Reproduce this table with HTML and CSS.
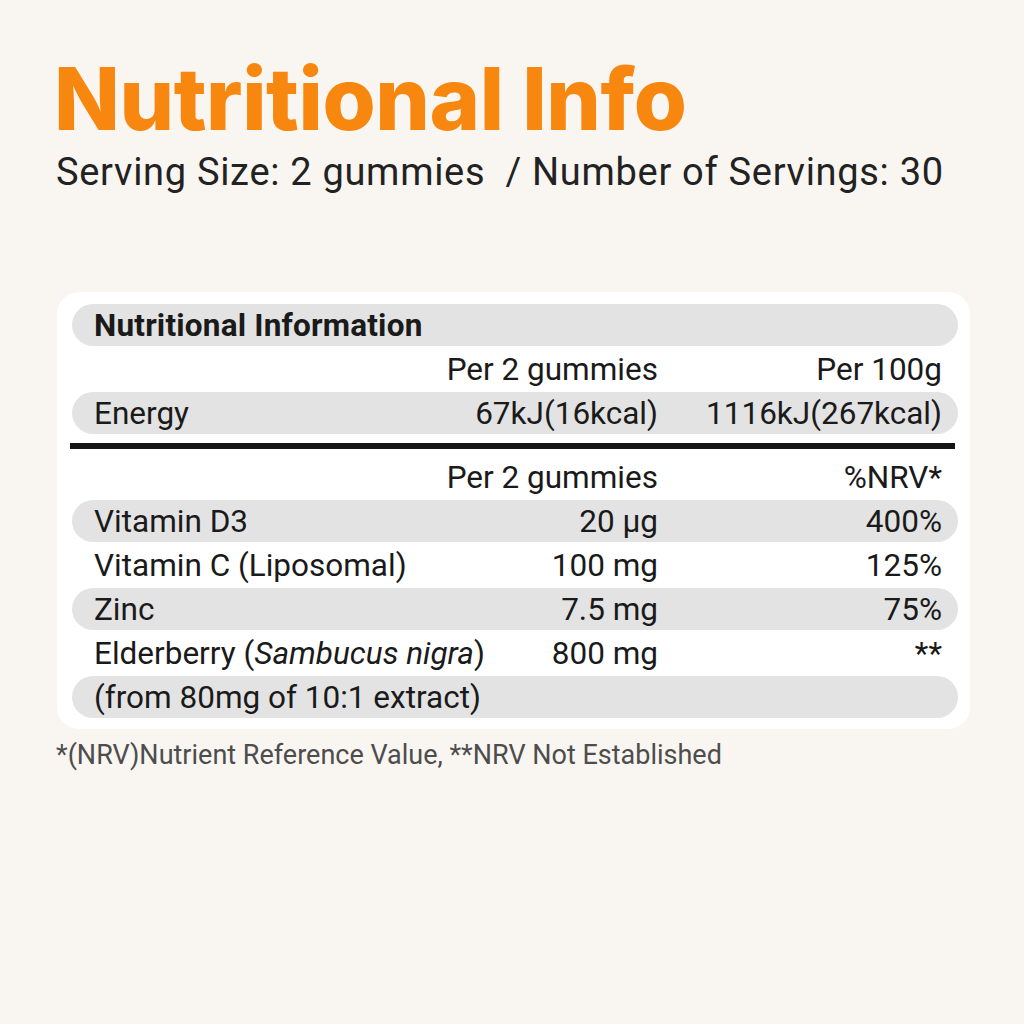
FILE: index.html
```html
<!DOCTYPE html>
<html lang="en">
<head>
<meta charset="utf-8">
<title>Nutritional Info</title>
<link rel="stylesheet" href="styles.css">
</head>
<body>
<main class="page">
  <h1 class="title">Nutritional Info</h1>
  <p class="subtitle">Serving Size: 2 gummies &nbsp;/ Number of Servings: 30</p>

  <section class="card">
    <div class="row shade"><span class="c1 head">Nutritional Information</span></div>
    <div class="row"><span class="c1"></span><span class="c2">Per 2 gummies</span><span class="c3">Per 100g</span></div>
    <div class="row shade"><span class="c1">Energy</span><span class="c2">67kJ(16kcal)</span><span class="c3">1116kJ(267kcal)</span></div>
    <div class="rule"></div>
    <div class="row"><span class="c1"></span><span class="c2">Per 2 gummies</span><span class="c3">%NRV*</span></div>
    <div class="row shade"><span class="c1">Vitamin D3</span><span class="c2">20 µg</span><span class="c3">400%</span></div>
    <div class="row"><span class="c1">Vitamin C (Liposomal)</span><span class="c2">100 mg</span><span class="c3">125%</span></div>
    <div class="row shade"><span class="c1">Zinc</span><span class="c2">7.5 mg</span><span class="c3">75%</span></div>
    <div class="row"><span class="c1">Elderberry (<em>Sambucus nigra</em>)</span><span class="c2">800 mg</span><span class="c3">**</span></div>
    <div class="row shade"><span class="c1">(from 80mg of 10:1 extract)</span></div>
  </section>

  <p class="note">*(NRV)Nutrient Reference Value, **NRV Not Established</p>
</main>
</body>
</html>
```
FILE: styles.css
```css
html, body {
  margin: 0;
  padding: 0;
  background: #f9f6f1;
}

.page {
  width: 1024px;
  height: 1024px;
  box-sizing: border-box;
  padding: 56px 0 0 0;
  font-family: Roboto, "Liberation Sans", sans-serif;
  color: #1a1a1a;
}

.title {
  margin: 0 0 0 54px;
  font-family: Inter, "Liberation Sans", sans-serif;
  font-weight: 800;
  font-size: 86px;
  line-height: 86px;
  letter-spacing: -0.4px;
  color: #f7870f;
}

.subtitle {
  margin: 8px 0 0 56px;
  font-size: 38px;
  line-height: 44px;
  letter-spacing: 0.7px;
  font-weight: 400;
  color: #222;
}

.card {
  margin: 98px 0 0 57px;
  width: 913px;
  box-sizing: border-box;
  background: #ffffff;
  border-radius: 22px;
  padding: 12px 12px 9px 15px;
  display: flex;
  flex-direction: column;
}

.row {
  display: flex;
  align-items: center;
  height: 42px;
  margin-bottom: 2px;
  padding: 0 16px 0 22px;
  border-radius: 21px;
  font-size: 31.5px;
  white-space: nowrap;
}

.row.shade {
  background: #e3e3e3;
}

.c1 {
  flex: 1;
  min-width: 0;
}

.c2 {
  width: 260px;
  text-align: right;
  margin-left: -60px;
}

.c3 {
  width: 284px;
  text-align: right;
}

.head {
  font-weight: 700;
  letter-spacing: 0.2px;
}

.rule {
  height: 6px;
  background: #151515;
  margin: 7px 3px 7px -2px;
}

.note {
  margin: 10px 0 0 56px;
  font-size: 27px;
  line-height: 32px;
  color: #4d4d4d;
}
```
